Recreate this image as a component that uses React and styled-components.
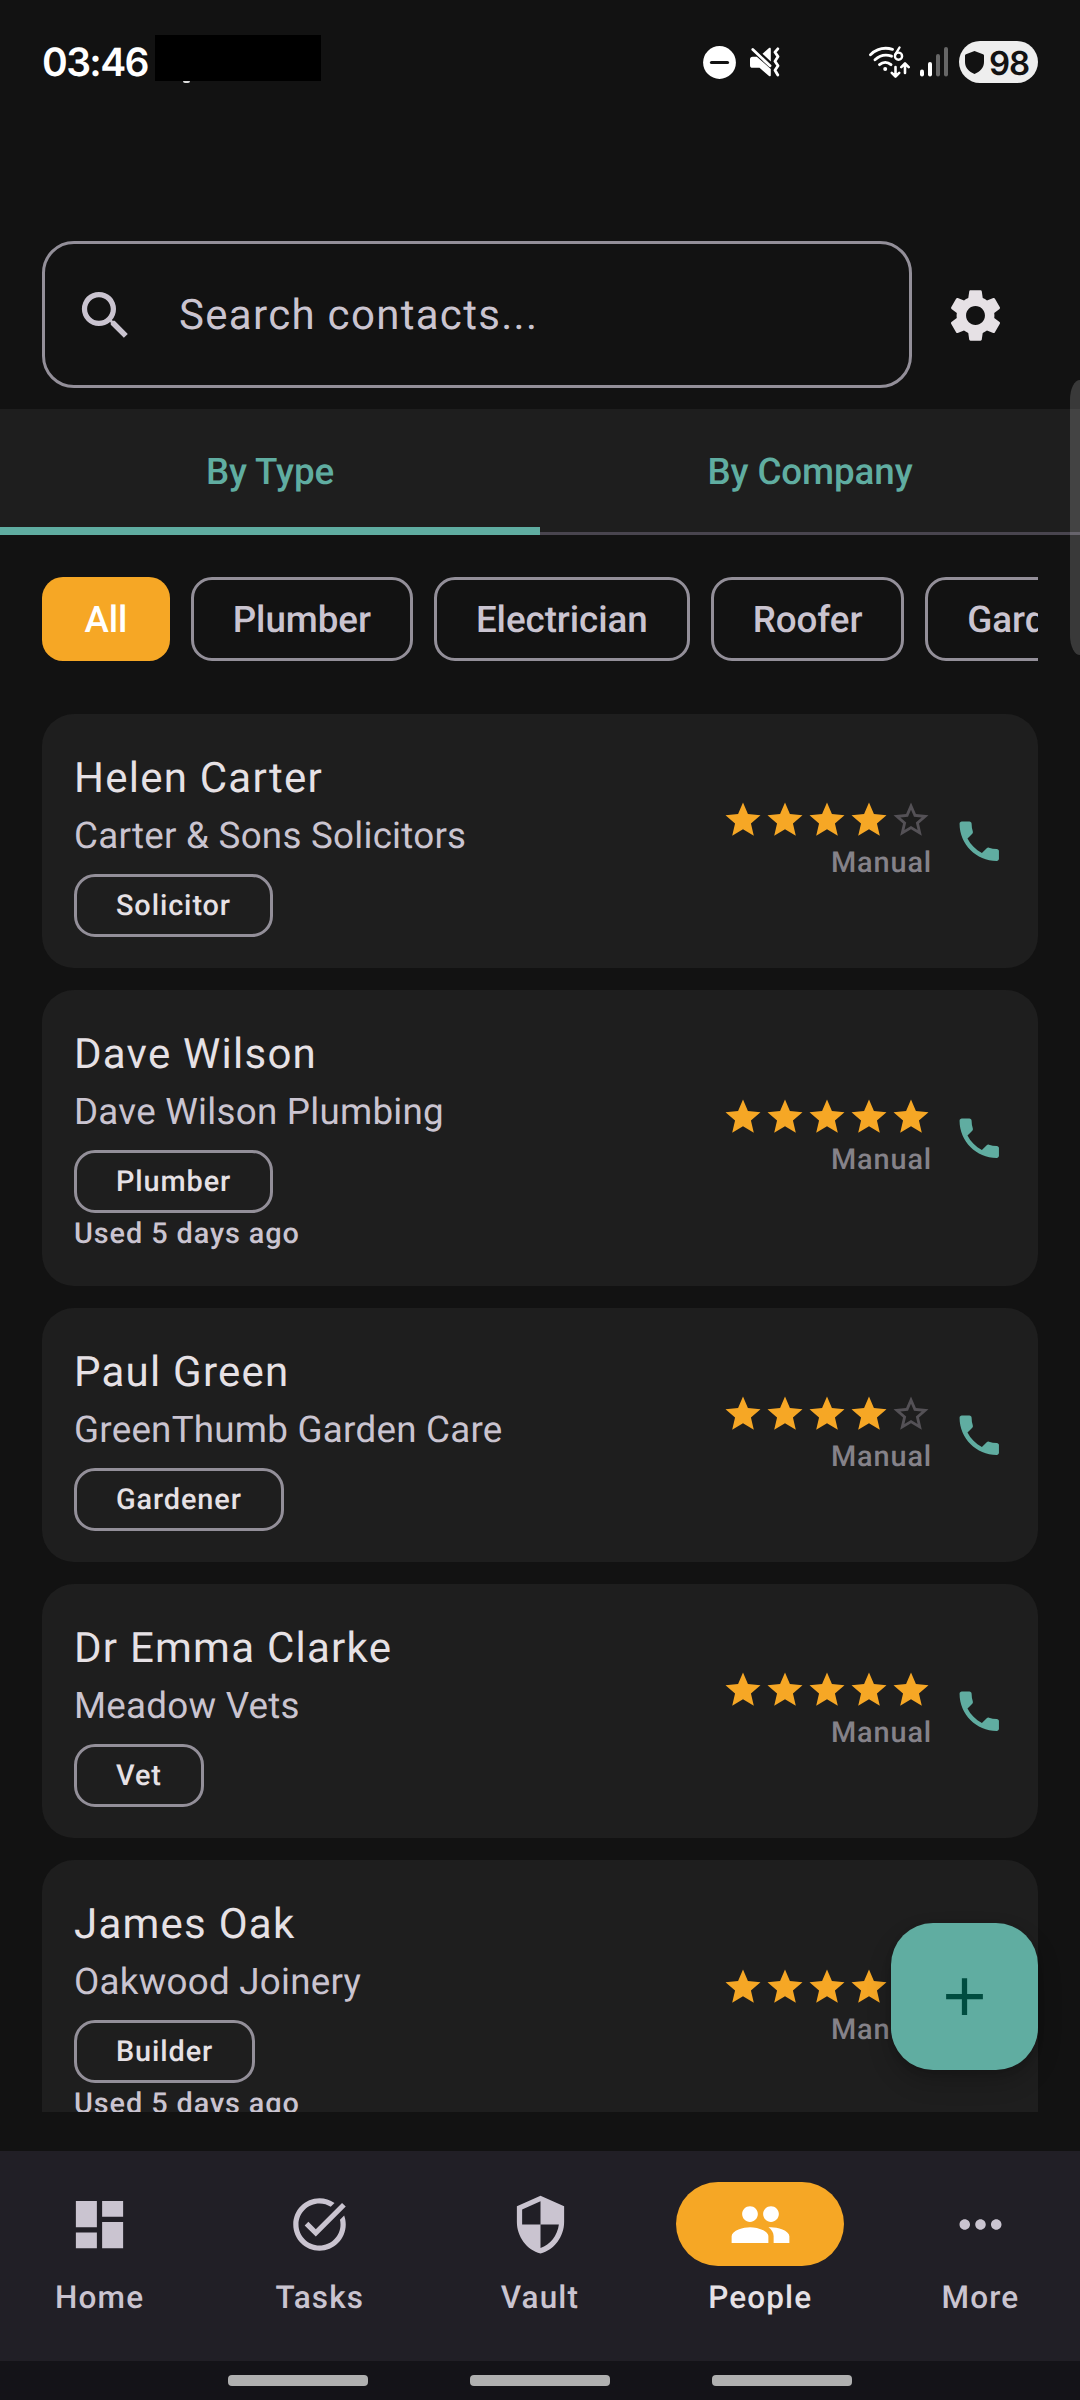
import React from "react";
import styled, { createGlobalStyle } from "styled-components";
import {
  MdSearch,
  MdSettings,
  MdStar,
  MdStarBorder,
  MdPhone,
  MdAdd,
  MdDashboard,
  MdTaskAlt,
  MdSecurity,
  MdPeople,
  MdMoreHoriz,
} from "react-icons/md";

const color = {
  bg: "#121212",
  card: "#1e1e1e",
  teal: "#60ada1",
  amber: "#f6a725",
  outline: "#938f99",
  divider: "#49454f",
  text: "#e6e1e5",
  textMuted: "#cac4d0",
  nav: "#211f26",
};

const GlobalStyle = createGlobalStyle`
  * { box-sizing: border-box; }
  html, body { margin: 0; padding: 0; background: ${color.bg}; }
  body {
    font-family: Roboto, "Liberation Sans", sans-serif;
    color: ${color.text};
    text-rendering: geometricPrecision;
  }
  svg { display: block; flex: none; }
  button { font: inherit; color: inherit; background: none; border: 0; padding: 0; text-rendering: inherit; }
`;

const Screen = styled.div`
  position: relative;
  width: 1080px;
  height: 2400px;
  overflow: hidden;
  display: flex;
  flex-direction: column;
  background: ${color.bg};
`;

/* ---------- status bar ---------- */

const StatusBar = styled.header`
  flex: none;
  height: 241px;
  padding: 35px 42px 0;
  display: flex;
  align-items: flex-start;
`;

const Clock = styled.div`
  width: 113px;
  height: 56px;
  line-height: 56px;
  font-family: Inter, Roboto, sans-serif;
  font-weight: 600;
  font-size: 39px;
  letter-spacing: -1.6px;
  color: #fff;
  white-space: nowrap;
`;

const Redacted = styled.div`
  display: flex;
  flex-direction: column;
  width: 166px;

  &::before {
    content: "";
    height: 46px;
    background: #000;
  }
  &::after {
    content: "";
    width: 7px;
    height: 2px;
    margin-left: 28px;
    border-radius: 0 0 4px 4px;
    background: #ddd;
  }
`;

const StatusIcons = styled.div`
  margin-left: auto;
  padding-top: 6px;
  height: 48px;
  display: flex;
  align-items: center;
`;

const Spacer = styled.div`
  width: ${(p) => p.$w}px;
  flex: none;
`;

const Battery = styled.div`
  width: 79px;
  height: 42px;
  border-radius: 21px;
  padding-left: 6px;
  display: flex;
  align-items: center;
  gap: 5px;
  background: #eee;
  color: ${color.bg};
  font-family: Inter, Roboto, sans-serif;
  font-weight: 600;
  font-size: 33px;
  line-height: 42px;
  letter-spacing: -1.2px;
`;

const BatteryLevel = styled.span`
  padding-top: 1px;
`;

/* ---------- search ---------- */

const SearchRow = styled.div`
  flex: none;
  display: flex;
  align-items: center;
  height: 147px;
  margin: 0 42px 21px;
`;

const SearchField = styled.div`
  width: 870px;
  height: 147px;
  border: 3px solid ${color.outline};
  border-radius: 32px;
  display: flex;
  align-items: center;
  padding: 1px 0 0 29px;
  gap: 42px;
  font-size: 42px;
  letter-spacing: 1.31px;
  color: ${color.textMuted};
`;

const SettingsButton = styled.button`
  width: 126px;
  height: 126px;
  padding-top: 1px;
  display: grid;
  place-items: center;
  color: ${color.text};
`;

/* ---------- tabs and filters ---------- */

const Tabs = styled.div`
  flex: none;
  display: grid;
  grid-template-columns: 1fr 1fr;
  height: 126px;
  background: ${color.card};
`;

const Tab = styled.button`
  padding-bottom: 1px;
  font-size: 36.75px;
  font-weight: 500;
  letter-spacing: -0.1px;
  color: ${color.teal};
  box-shadow: inset 0 ${(p) => (p.$active ? `-8px ${color.teal}` : `-3px ${color.divider}`)};
`;

const Filters = styled.div`
  flex: none;
  display: flex;
  gap: 21px;
  margin: 42px 42px 0;
  height: 84px;
  overflow: hidden;
`;

const FilterChip = styled.button`
  flex: none;
  height: 84px;
  padding: 0 ${(p) => (p.$selected ? 42.4 : 39)}px;
  border: ${(p) => (p.$selected ? "0" : `3px solid ${color.outline}`)};
  border-radius: 21px;
  background: ${(p) => (p.$selected ? color.amber : "transparent")};
  color: ${(p) => (p.$selected ? "#fff" : color.textMuted)};
  font-size: 36.75px;
  font-weight: 500;
  letter-spacing: -0.06px;
`;

/* ---------- contact list ---------- */

const ContactList = styled.main`
  flex: none;
  height: 1398px;
  margin: 53px 42px 39px;
  overflow: hidden;
  display: flex;
  flex-direction: column;
  gap: 22px;
`;

const Card = styled.article`
  flex: none;
  display: flex;
  align-items: center;
  gap: 21px;
  padding: 32px 32.4px 31px 32px;
  border-radius: 32px;
  background: ${color.card};
`;

const Details = styled.div`
  flex: 1;
  display: flex;
  flex-direction: column;
  align-items: flex-start;
`;

const Name = styled.div`
  padding-top: 1px;
  font-size: 42px;
  line-height: 63px;
  letter-spacing: 1.24px;
`;

const Company = styled.div`
  font-size: 36.75px;
  line-height: 52px;
  letter-spacing: 0.25px;
  color: ${color.textMuted};
`;

const Tag = styled.div`
  height: 63px;
  margin-top: 12px;
  padding: 0 39px;
  border: 3px solid ${color.outline};
  border-radius: 21px;
  font-size: 28.875px;
  line-height: 59px;
  font-weight: 500;
  letter-spacing: 0.9px;
`;

const Caption = styled.div`
  font-size: 28.875px;
  line-height: 42px;
  font-weight: 500;
  letter-spacing: 0.9px;
  color: ${(p) => (p.$faint ? "#858289" : color.textMuted)};
`;

const Rating = styled.div`
  display: flex;
  flex-direction: column;
  align-items: flex-end;
  gap: 1px;
  padding-bottom: 1px;
`;

const Stars = styled.div`
  display: flex;
  color: ${color.amber};
`;

const EmptyStar = styled(MdStarBorder)`
  color: #545156;
`;

const CallButton = styled.button`
  color: ${color.teal};
`;

/* ---------- floating elements ---------- */

const Fab = styled.button`
  position: absolute;
  right: 42px;
  bottom: 330px;
  width: 147px;
  height: 147px;
  border-radius: 42px;
  display: grid;
  place-items: center;
  background: ${color.teal};
  color: #004d40;
  box-shadow: 0 12px 24px rgba(0, 0, 0, 0.2), 0 2px 6px rgba(0, 0, 0, 0.12);
`;

const EdgeHandle = styled.div`
  position: absolute;
  right: 0;
  top: 380px;
  width: 10px;
  height: 275px;
  border-radius: 10px 0 0 10px / 20px 0 0 20px;
  background: rgba(255, 255, 255, 0.17);
`;

/* ---------- bottom navigation ---------- */

const BottomNav = styled.nav`
  flex: none;
  height: 210px;
  display: flex;
  gap: 21px;
  background: ${color.nav};
`;

const NavItem = styled.button`
  flex: 1;
  display: flex;
  flex-direction: column;
  align-items: center;
  padding-top: 31px;
  gap: 11px;
  font-size: 31.5px;
  line-height: 42px;
  font-weight: 500;
  letter-spacing: 1.15px;
  color: ${(p) => (p.$active ? color.text : color.textMuted)};
`;

const Indicator = styled.span`
  width: 168px;
  height: 84px;
  border-radius: 42px;
  display: grid;
  place-items: center;
  background: ${(p) => (p.$active ? color.amber : "transparent")};
  color: ${(p) => (p.$active ? "#fff" : color.textMuted)};
`;

const SystemBar = styled.footer`
  flex: none;
  height: 39px;
  padding-top: 14px;
  display: flex;
  justify-content: center;
  gap: 102px;
  background: #141318;
`;

const SystemKey = styled.div`
  width: 140px;
  height: 11px;
  border-radius: 4px;
  background: #b0b0b0;
`;

/* ---------- status glyphs ---------- */

const DoNotDisturb = () => (
  <svg width="33" height="33" viewBox="0 0 33 33">
    <circle cx="16.5" cy="16.5" r="16.4" fill="#fff" />
    <path d="M8.5 16.5h16" stroke="#121212" strokeWidth="3.2" strokeLinecap="round" />
  </svg>
);

const MutedVibrate = () => (
  <svg width="30" height="30" viewBox="0 0 30 30" fill="none">
    <path d="M12.5 6.8 19 1c.8-.7 1.8-.3 1.8.8v12.8z" fill="#fff" />
    <path
      d="M0 12.3q0-2.6 2.6-2.6H6.8L20.8 22v6.2c0 1.2-1 1.5-1.8.8L9.5 20.8H2.6Q0 20.8 0 18.2z"
      fill="#fff"
    />
    <path d="M2.8 2.5 20 18.8" stroke="#fff" strokeWidth="2.8" strokeLinecap="round" />
    <path
      d="M27.8 1.8 25 5.2l3 4.4-3 4.6 3 4.6-3 4.4 2.8 4.8"
      stroke="#fff"
      strokeWidth="2.8"
      strokeLinecap="round"
      strokeLinejoin="round"
    />
  </svg>
);

const WifiSix = () => (
  <svg width="41" height="32" viewBox="0 0 41 32" fill="none" stroke="#fff" strokeLinecap="round">
    <path d="M1.5 8.7C8 2.6 16 1.2 23.5 3.3" strokeWidth="2.9" />
    <path d="M6 13.8c5-4.6 11-5.6 16.5-3.6" strokeWidth="2.9" />
    <path d="M10.5 18.6c3.5-3 8-3 11.5 0" strokeWidth="2.9" />
    <circle cx="16.2" cy="23" r="2" fill="#fff" stroke="none" />
    <circle cx="29.5" cy="10.2" r="3.6" strokeWidth="2.4" />
    <path d="M26.4 8.3 30.5 1.5" strokeWidth="2.4" />
    <path d="M26.5 21v9M22.8 26.8l3.7 3.7 3.7-3.7" strokeWidth="2.6" strokeLinejoin="round" />
    <path d="M36 27v-9M32.3 21.2l3.7-3.7 3.7 3.7" strokeWidth="2.6" strokeLinejoin="round" />
  </svg>
);

const Signal = () => (
  <svg width="28" height="30" viewBox="0 0 28 30">
    <rect x="0" y="22.5" width="4" height="7" rx="2" fill="#fff" />
    <rect x="8" y="15" width="4" height="14.5" rx="2" fill="#fff" />
    <rect x="16" y="7" width="4" height="22.5" rx="2" fill="#666" />
    <rect x="24" y="0" width="4" height="29.5" rx="2" fill="#666" />
  </svg>
);

const BatteryShield = () => (
  <svg width="19" height="23" viewBox="0 0 19 23">
    <path
      d="M9.5 0 18 3.2Q19 3.5 19 4.5V11c0 5.8-4 9.8-9.5 12C4 20.8 0 16.8 0 11V4.5Q0 3.5 1 3.2z"
      fill="#121212"
    />
  </svg>
);

/* ---------- data ---------- */

const filters = ["All", "Plumber", "Electrician", "Roofer", "Gardener"];

const contacts = [
  { name: "Helen Carter", company: "Carter & Sons Solicitors", tag: "Solicitor", stars: 4 },
  { name: "Dave Wilson", company: "Dave Wilson Plumbing", tag: "Plumber", stars: 5, used: "Used 5 days ago" },
  { name: "Paul Green", company: "GreenThumb Garden Care", tag: "Gardener", stars: 4 },
  { name: "Dr Emma Clarke", company: "Meadow Vets", tag: "Vet", stars: 5 },
  { name: "James Oak", company: "Oakwood Joinery", tag: "Builder", stars: 4, used: "Used 5 days ago" },
];

const navItems = [
  { label: "Home", Icon: MdDashboard },
  { label: "Tasks", Icon: MdTaskAlt },
  { label: "Vault", Icon: MdSecurity },
  { label: "People", Icon: MdPeople, active: true },
  { label: "More", Icon: MdMoreHoriz },
];

function ContactCard({ contact }) {
  return (
    <Card>
      <Details>
        <Name>{contact.name}</Name>
        <Company>{contact.company}</Company>
        <Tag>{contact.tag}</Tag>
        {contact.used && <Caption>{contact.used}</Caption>}
      </Details>
      <Rating>
        <Stars>
          {[1, 2, 3, 4, 5].map((n) =>
            n <= contact.stars ? <MdStar key={n} size={42} /> : <EmptyStar key={n} size={42} />
          )}
        </Stars>
        <Caption $faint>Manual</Caption>
      </Rating>
      <CallButton aria-label="Call">
        <MdPhone size={52.5} />
      </CallButton>
    </Card>
  );
}

export default function App() {
  return (
    <>
      <GlobalStyle />
      <Screen>
        <StatusBar>
          <Clock>03:46</Clock>
          <Redacted />
          <StatusIcons>
            <DoNotDisturb />
            <Spacer $w={14} />
            <MutedVibrate />
            <Spacer $w={89} />
            <WifiSix />
            <Spacer $w={10} />
            <Signal />
            <Spacer $w={11} />
            <Battery>
              <BatteryShield />
              <BatteryLevel>98</BatteryLevel>
            </Battery>
          </StatusIcons>
        </StatusBar>

        <SearchRow>
          <SearchField>
            <MdSearch size={63} />
            Search contacts...
          </SearchField>
          <SettingsButton aria-label="Settings">
            <MdSettings size={63} />
          </SettingsButton>
        </SearchRow>

        <Tabs>
          <Tab $active>By Type</Tab>
          <Tab>By Company</Tab>
        </Tabs>

        <Filters>
          {filters.map((label, i) => (
            <FilterChip key={label} $selected={i === 0}>
              {label}
            </FilterChip>
          ))}
        </Filters>

        <ContactList>
          {contacts.map((contact) => (
            <ContactCard key={contact.name} contact={contact} />
          ))}
        </ContactList>

        <BottomNav>
          {navItems.map(({ label, Icon, active }) => (
            <NavItem key={label} $active={active}>
              <Indicator $active={active}>
                <Icon size={63} />
              </Indicator>
              {label}
            </NavItem>
          ))}
        </BottomNav>

        <SystemBar>
          <SystemKey />
          <SystemKey />
          <SystemKey />
        </SystemBar>

        <Fab aria-label="Add contact">
          <MdAdd size={63} />
        </Fab>
        <EdgeHandle />
      </Screen>
    </>
  );
}
